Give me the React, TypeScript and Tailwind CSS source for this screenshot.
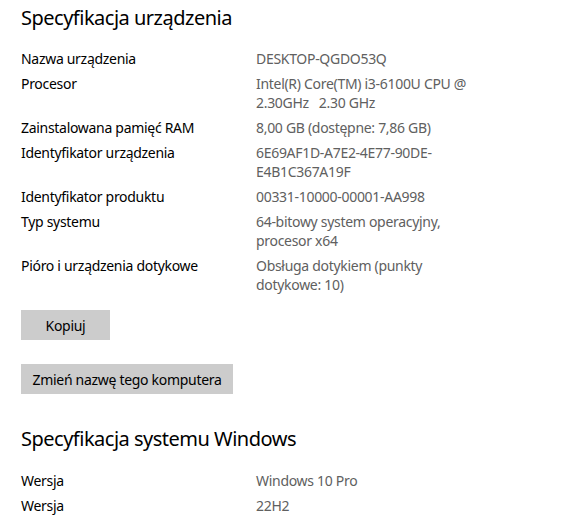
import React from 'react';

const rows: { label: string; value: string[] }[] = [
  { label: 'Nazwa urządzenia', value: ['DESKTOP-QGDO53Q'] },
  { label: 'Procesor', value: ['Intel(R) Core(TM) i3-6100U CPU @', '2.30GHz   2.30 GHz'] },
  { label: 'Zainstalowana pamięć RAM', value: ['8,00 GB (dostępne: 7,86 GB)'] },
  { label: 'Identyfikator urządzenia', value: ['6E69AF1D-A7E2-4E77-90DE-', 'E4B1C367A19F'] },
  { label: 'Identyfikator produktu', value: ['00331-10000-00001-AA998'] },
  { label: 'Typ systemu', value: ['64-bitowy system operacyjny,', 'procesor x64'] },
  { label: 'Pióro i urządzenia dotykowe', value: ['Obsługa dotykiem (punkty', 'dotykowe: 10)'] },
];

const windowsRows: { label: string; value: string[] }[] = [
  { label: 'Wersja', value: ['Windows 10 Pro'] },
  { label: 'Wersja', value: ['22H2'] },
];

function SpecRows({ items }: { items: { label: string; value: string[] }[] }) {
  return (
    <div className="flex flex-col gap-[6px]">
      {items.map((r, i) => (
        <div key={i} className="flex text-[14px] leading-[19px] tracking-[-0.3px]">
          <div className="w-[235px] shrink-0 text-black">{r.label}</div>
          <div className="text-[#606060]">
            {r.value.map((v, j) => (
              <div key={j} className="whitespace-pre">{v}</div>
            ))}
          </div>
        </div>
      ))}
    </div>
  );
}

export default function App() {
  return (
    <div
      className="min-h-screen bg-white pl-[21px] pt-[4px]"
      style={{ fontFamily: '"Noto Sans", "Open Sans", sans-serif' }}
    >
      <h1 className="text-[20px] leading-[28px] tracking-[-0.5px] text-black">Specyfikacja urządzenia</h1>

      <div className="mt-[17px]">
        <SpecRows items={rows} />
      </div>

      <div className="mt-[16px] flex flex-col items-start gap-[24px]">
        <button className="h-[30px] w-[89px] bg-[#cccccc] text-[14px] tracking-[-0.3px] text-black">Kopiuj</button>
        <button className="h-[30px] w-[212px] bg-[#cccccc] text-[14px] tracking-[-0.3px] text-black">
          Zmień nazwę tego komputera
        </button>
      </div>

      <h2 className="mt-[31px] text-[20px] leading-[28px] tracking-[-0.5px] text-black">Specyfikacja systemu Windows</h2>

      <div className="mt-[18px]">
        <SpecRows items={windowsRows} />
      </div>
    </div>
  );
}
